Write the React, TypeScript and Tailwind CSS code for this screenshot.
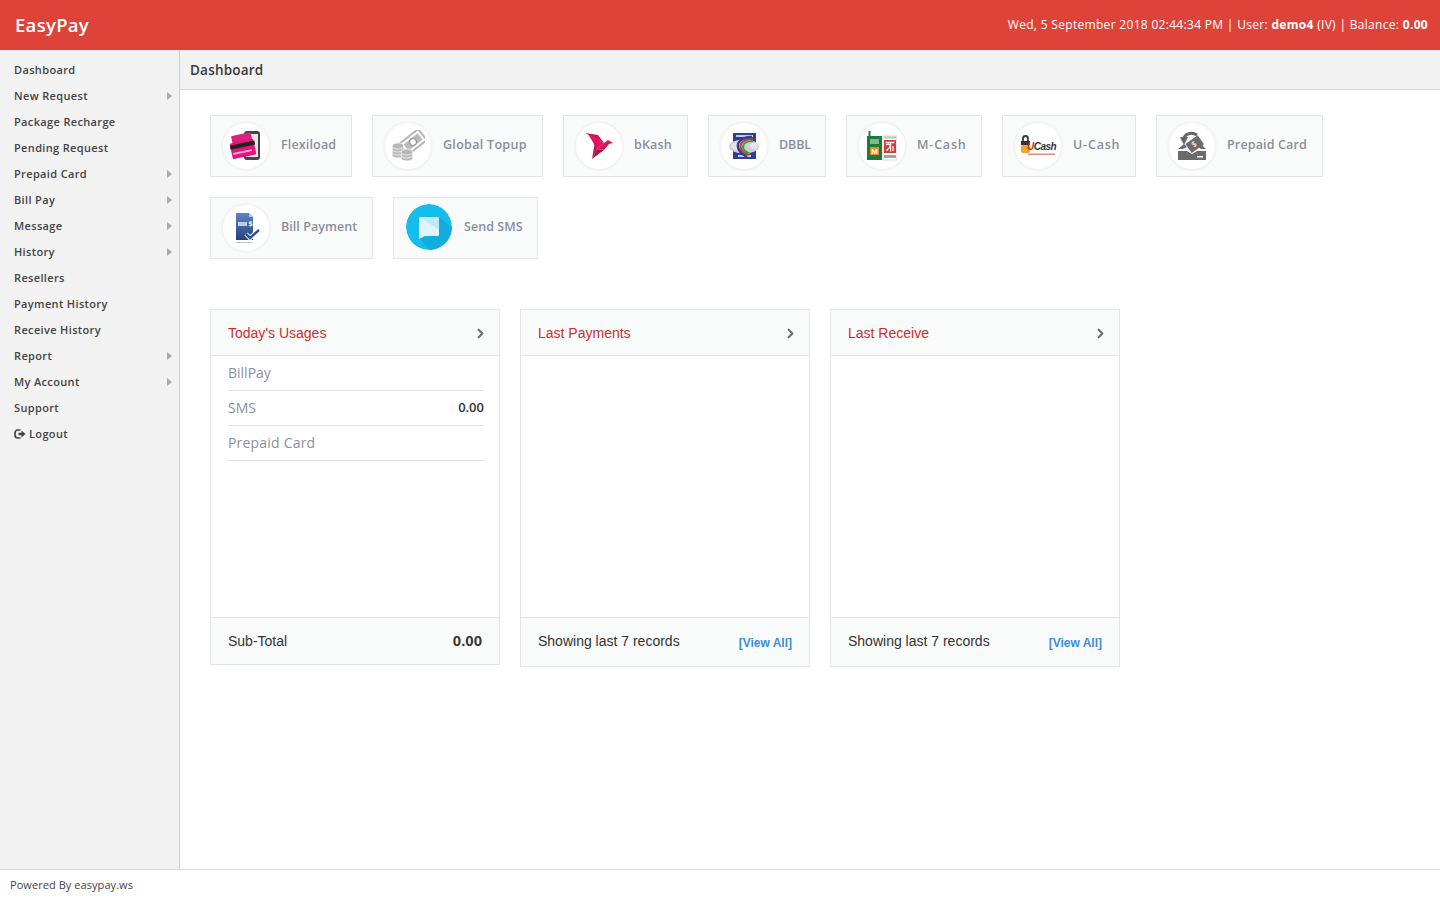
import React from "react";
import { ChevronRight } from "lucide-react";

const ui = "font-['Open_Sans','DejaVu_Sans',sans-serif]";
const helv = "font-['Liberation_Sans',Arial,sans-serif]";

const Flexi = () => (
  <svg viewBox="0 0 32 32" className="w-8 h-8">
    <rect x="14" y="1" width="16" height="29" rx="3" fill="#444" />
    <rect x="16" y="4" width="12" height="23" fill="#e4e6ea" />
    <rect x="2" y="4" width="20" height="12" rx="1" fill="#d9237f" transform="rotate(-12 12 10)" />
    <rect x="1" y="11" width="24" height="16" rx="1" fill="#e5147c" transform="rotate(-12 13 19)" />
    <rect x="0" y="13" width="25" height="4" fill="#222" transform="rotate(-12 13 15)" />
    <rect x="3" y="21" width="19" height="2" fill="#f7a8cf" transform="rotate(-12 13 22)" />
  </svg>
);
const Topup = () => (
  <svg viewBox="0 0 34 32" className="w-[34px] h-8">
    <g transform="rotate(-38 22 12)">
      <rect x="10" y="5" width="24" height="14" fill="#fff" stroke="#b4b4b4" strokeWidth="2" />
      <rect x="13" y="8" width="18" height="8" fill="#bbbbbb" />
      <circle cx="22" cy="12" r="3.500" fill="#fff" stroke="#999" strokeWidth="1.500" />
    </g>
    <g fill="#b8b8b8" stroke="#fff" strokeWidth="0.700">
      <ellipse cx="7" cy="25" rx="6" ry="3" />
      <ellipse cx="7" cy="22" rx="6" ry="3" />
      <ellipse cx="7" cy="19" rx="6" ry="3" />
      <ellipse cx="7" cy="16" rx="6" ry="3" />
      <ellipse cx="16" cy="28" rx="6" ry="3" />
      <ellipse cx="16" cy="25" rx="6" ry="3" />
      <ellipse cx="16" cy="22" rx="6" ry="3" />
    </g>
  </svg>
);
const Bkash = () => (
  <svg viewBox="0 0 30 30" className="w-[30px] h-[30px]">
    <path d="M1 2 L14 4 L20 12 Z" fill="#d0154f" />
    <path d="M4 3 L20 12 L13 18 Z" fill="#e5126f" />
    <path d="M20 12 L24 9 L29 12 L25 13 L20 19 L13 18 Z" fill="#d81561" />
    <path d="M13 18 L20 19 L8 28 Z" fill="#a8153f" />
    <path d="M13 18 L11 10 L8 28 Z" fill="#bf1450" />
  </svg>
);
const Dbbl = () => (
  <svg viewBox="0 0 30 30" className="w-[30px] h-[30px]">
    <rect x="4" y="2" width="23" height="26" fill="#2e3f95" />
    <rect x="7" y="4" width="17" height="2" fill="#c5cbe6" />
    <rect x="9" y="24" width="13" height="2" fill="#c5cbe6" />
    <ellipse cx="15" cy="15.500" rx="15" ry="7" fill="#cfcfd4" />
    <ellipse cx="7" cy="15" rx="5" ry="3.500" fill="#e6e6ea" />
    <ellipse cx="25" cy="15" rx="4" ry="3" fill="#e6e6ea" />
    <path d="M23 6 C13 6 8 11 9 16 C9.500 20 13 23 18 26" fill="none" stroke="#2e3f95" strokeWidth="2.500" />
    <path d="M24 8 C15 8 11 12 11.500 16 C12 19 15 22 20 24" fill="none" stroke="#e0303a" strokeWidth="2" />
    <path d="M24 10 C17 10 14 13 14 16 C14 19 17 21 21 23" fill="none" stroke="#2aa64a" strokeWidth="2" />
  </svg>
);
const Mcash = () => (
  <svg viewBox="0 0 30 30" className="w-[30px] h-[30px]">
    <rect x="1.500" y="0" width="2" height="6" fill="#1d7a3e" />
    <rect x="0" y="5" width="15" height="24" fill="#1d7a3e" />
    <rect x="3" y="8" width="9" height="5" fill="#7fb693" />
    <rect x="3" y="16" width="9" height="8" fill="#e98a1c" />
    <text x="7.500" y="23" fontSize="8" fontWeight="700" fill="#fff" textAnchor="middle" fontFamily="Liberation Sans, sans-serif">M</text>
    <rect x="16" y="5" width="14" height="24" fill="#fff" stroke="#d8a0a0" strokeWidth="0.500" />
    <rect x="17" y="5.500" width="12" height="2" fill="#b8c8bc" />
    <rect x="17" y="9" width="12" height="13" fill="#d63a35" />
    <path d="M18.500 11.500h9M23.500 11.500v9M19 14c3-2 5 0 4 2s-4 2-3 4M26 15v5" fill="none" stroke="#fff" strokeWidth="1.300" />
    <rect x="17" y="24" width="12" height="3" fill="#98a89c" />
  </svg>
);
const Ucash = () => (
  <span className="relative block w-[38px] h-[26px]">
    <svg viewBox="0 0 38 26" className="absolute inset-0 w-[38px] h-[26px]">
      <path d="M4 9V5.500a2.500 2.500 0 0 1 5 0V9" fill="none" stroke="#3a3a3a" strokeWidth="1.800" />
      <rect x="2" y="8" width="9" height="4" fill="#333" />
      <rect x="2" y="12" width="9" height="8" rx="2" fill="#f0a732" />
      <rect x="9" y="20.500" width="27" height="1.500" fill="#e58a80" />
    </svg>
    <span className={`absolute left-[8px] top-[8px] ${helv} text-[10px] leading-[12px] font-bold italic tracking-[-0.5px] text-[#333]`}>
      <span className="text-[#d8261c]">U</span>Cash
    </span>
  </span>
);
const Prepaid = () => (
  <svg viewBox="0 0 30 32" className="w-[30px] h-8">
    <path d="M6 11 C7 4 14 1 20 5" fill="none" stroke="#666" strokeWidth="3" />
    <path d="M3 7 L11 7 L7 15 Z" fill="#666" />
    <rect x="10" y="9" width="15" height="11" fill="#6b6b6b" transform="rotate(-35 17 14)" />
    <text x="17" y="17" fontSize="8" fill="#fff" textAnchor="middle" transform="rotate(-35 17 14)">$</text>
    <path d="M1 30V21h9l5 3 5-3h9v9z" fill="#6b6b6b" />
    <path d="M1 19l6-5 3 3-4 2zM29 19l-5-5-3 3 3 2z" fill="#6b6b6b" />
    <rect x="20" y="26" width="6" height="1.500" fill="#fff" />
  </svg>
);
const Bill = () => (
  <svg viewBox="0 0 30 34" className="w-[30px] h-[34px]">
    <defs>
      <linearGradient id="billFill" x1="0" y1="0" x2="0" y2="1">
        <stop offset="0" stopColor="#5c84c4" />
        <stop offset="0.500" stopColor="#41659f" />
        <stop offset="1" stopColor="#263f7c" />
      </linearGradient>
    </defs>
    <path d="M5 2h13l4 4v23H5z" fill="url(#billFill)" />
    <path d="M18 2l4 4h-4z" fill="#b5c6e4" />
    <rect x="7" y="11" width="9" height="4" fill="#c2cde0" />
    <text x="19.500" y="15" fontSize="7" fill="#fff" textAnchor="middle" fontWeight="700">$</text>
    <path d="M15 23l4 4 9-8" fill="none" stroke="#fff" strokeWidth="4.500" />
    <path d="M15 23l4 4 9-8" fill="none" stroke="#34518f" strokeWidth="2.500" />
    <rect x="5" y="31" width="17" height="1" fill="#c4c8d0" />
  </svg>
);
const Sms = () => (
  <svg viewBox="0 0 46 46" className="w-[46px] h-[46px] rounded-full">
    <circle cx="23" cy="23" r="23" fill="#14bdea" />
    <path d="M13 34L24 46H46V24L33 13Z" fill="#10addd" />
    <rect x="13" y="13" width="20" height="19" rx="1.500" fill="#dff5fc" />
    <path d="M13 35v-6l6 3z" fill="#dff5fc" />
    <path d="M14 13h18a1 1 0 0 1 1 1v12z" fill="#bfe9f8" />
  </svg>
);

const menu: [string, boolean][] = [
  ["Dashboard", false], ["New Request", true], ["Package Recharge", false], ["Pending Request", false],
  ["Prepaid Card", true], ["Bill Pay", true], ["Message", true], ["History", true], ["Resellers", false],
  ["Payment History", false], ["Receive History", false], ["Report", true], ["My Account", true], ["Support", false],
];

const normal = "tracking-[0.15px]";
const wide = "tracking-[0.8px]";
const row1 = [
  { label: "Flexiload", w: "w-[142px]", track: normal, icon: <Flexi /> },
  { label: "Global Topup", w: "w-[171px]", track: "tracking-[0.3px]", icon: <Topup /> },
  { label: "bKash", w: "w-[125px]", track: normal, icon: <Bkash /> },
  { label: "DBBL", w: "w-[118px]", track: "tracking-[-0.1px]", icon: <Dbbl /> },
  { label: "M-Cash", w: "w-[136px]", track: wide, icon: <Mcash /> },
  { label: "U-Cash", w: "w-[134px]", track: wide, icon: <Ucash /> },
  { label: "Prepaid Card", w: "w-[167px]", track: normal, icon: <Prepaid /> },
];

function Tile({ label, w, icon, track }: { label: string; w: string; icon: React.ReactNode; track: string }) {
  return (
    <div className={`${w} h-[62px] shrink-0 flex items-center gap-[10px] pl-[10px] bg-[#f9fafa] border border-[#e5e5e5]`}>
      <span className="flex w-[50px] h-[50px] items-center justify-center rounded-full bg-white border-2 border-[#f3f3f3]">{icon}</span>
      <span className={`${ui} text-[12.500px] font-semibold ${track} text-[#8a8f9f] whitespace-nowrap mb-[2px]`}>{label}</span>
    </div>
  );
}

function PanelHead({ title }: { title: string }) {
  return (
    <div className="h-[46px] shrink-0 flex items-center justify-between pl-[17px] pr-[11px] bg-[#f9fafa] border-b border-[#e5e5e5]">
      <span className={`${helv} text-[14px] text-[#c9302c] mt-[2px]`}>{title}</span>
      <ChevronRight className="w-[15px] h-[15px] text-[#6b7080] mt-[2px]" strokeWidth={3.500} />
    </div>
  );
}

function RecordsPanel({ title }: { title: string }) {
  return (
    <div className="w-[290px] h-[358px] flex flex-col border border-[#e5e5e5] bg-white">
      <PanelHead title={title} />
      <div className="h-[261px] shrink-0" />
      <div className="flex-1 flex items-center justify-between pl-[17px] pr-[17px] bg-[#f9fafa] border-t border-[#e5e5e5]">
        <span className={`${helv} text-[14px] text-[#333] -mt-[2px]`}>Showing last 7 records</span>
        <span className={`${helv} text-[12px] font-bold text-[#3c8dd8] mt-[1px]`}>[View All]</span>
      </div>
    </div>
  );
}

export default function App() {
  return (
    <div className="w-[1440px] h-[900px] flex flex-col bg-white overflow-hidden">
      <header className="h-[50px] shrink-0 flex items-center justify-between pl-[15px] pr-[12px] bg-[#dd4339] text-white">
        <span className={`${ui} text-[18.500px] font-semibold tracking-[0.3px] -mt-[1px]`}>EasyPay</span>
        <span className={`${ui} text-[12px] tracking-[0.31px]`}>
          Wed, 5 September 2018 02:44:34 PM | User: <b>demo4</b> (IV) | Balance: <b>0.00</b>
        </span>
      </header>
      <div className="flex-1 flex min-h-0">
        <aside className="w-[180px] shrink-0 pt-[7px] bg-[#f2f2f2] border-r border-[#cfcfcf]">
          {menu.map(([label, arrow]) => (
            <div key={label} className={`h-[26px] flex items-center justify-between pl-[14px] pr-[7px] ${ui} text-[11px] font-semibold tracking-[0.35px] text-[#444]`}>
              <span>{label}</span>
              {arrow && <span className="w-0 h-0 border-y-[4px] border-y-transparent border-l-[5px] border-l-[#aaaaaa]" />}
            </div>
          ))}
          <div className={`h-[26px] flex items-center gap-[3px] pl-[14px] ${ui} text-[11px] font-semibold tracking-[0.35px] text-[#444]`}>
            <svg viewBox="0 0 12 12" className="w-3 h-3">
              <path d="M6.500 2H4a3 3 0 0 0-3 3v2a3 3 0 0 0 3 3h2.500" fill="none" stroke="#444" strokeWidth="1.700" />
              <path d="M4.500 4.700h3V2.500L11.500 6l-4 3.500V7.300h-3z" fill="#444" />
            </svg>
            <span>Logout</span>
          </div>
        </aside>
        <main className="flex-1 min-w-0">
          <div className="h-[40px] flex items-center pl-[10px] bg-[#f2f2f2] border-b border-[#d9d9d9]">
            <span className={`${ui} text-[13.500px] font-semibold tracking-[0.2px] text-[#3a3a3a] mt-[2px]`}>Dashboard</span>
          </div>
          <div className="pt-[25px] pl-[30px]">
            <div className="flex gap-5">
              {row1.map((t) => <Tile key={t.label} {...t} />)}
            </div>
            <div className="flex gap-5 mt-5">
              <Tile label="Bill Payment" w="w-[163px]" track="tracking-[0.05px]" icon={<Bill />} />
              <div className="w-[145px] h-[62px] shrink-0 flex items-center gap-[12px] pl-[12px] bg-[#f9fafa] border border-[#e5e5e5]">
                <span className="flex mb-[2px]"><Sms /></span>
                <span className={`${ui} text-[12.500px] font-semibold tracking-[0.05px] text-[#8a8f9f] whitespace-nowrap mb-[2px]`}>Send SMS</span>
              </div>
            </div>
            <div className="flex items-start gap-5 mt-[50px]">
              <div className="w-[290px] h-[356px] flex flex-col border border-[#e5e5e5] bg-white">
                <PanelHead title="Today's Usages" />
                <div className="h-[261px] shrink-0 pl-[17px] pr-[15px]">
                  <div className={`h-[35px] flex items-center border-b border-[#e5e5e5] pb-[2px] ${ui} text-[14px] text-[#8a8f9f]`}>BillPay</div>
                  <div className={`h-[35px] flex items-center justify-between border-b border-[#e5e5e5] pb-[2px] ${ui} text-[14px] text-[#8a8f9f]`}>
                    <span>SMS</span>
                    <span className="text-[13px] font-semibold text-[#333] mt-[1px]">0.00</span>
                  </div>
                  <div className={`h-[35px] flex items-center border-b border-[#e5e5e5] pb-[2px] ${ui} text-[14px] tracking-[0.2px] text-[#8a8f9f]`}>Prepaid Card</div>
                </div>
                <div className="flex-1 flex items-center justify-between pl-[17px] pr-[17px] bg-[#f9fafa] border-t border-[#e5e5e5]">
                  <span className={`${helv} text-[14px] text-[#333]`}>Sub-Total</span>
                  <span className={`${helv} text-[15px] font-bold text-[#333]`}>0.00</span>
                </div>
              </div>
              <RecordsPanel title="Last Payments" />
              <RecordsPanel title="Last Receive" />
            </div>
          </div>
        </main>
      </div>
      <footer className={`h-[31px] shrink-0 flex items-center pl-[10px] bg-white border-t border-[#d9d9d9] ${ui} text-[11px] tracking-[0.06px] text-[#444]`}>
        Powered By easypay.ws
      </footer>
    </div>
  );
}
